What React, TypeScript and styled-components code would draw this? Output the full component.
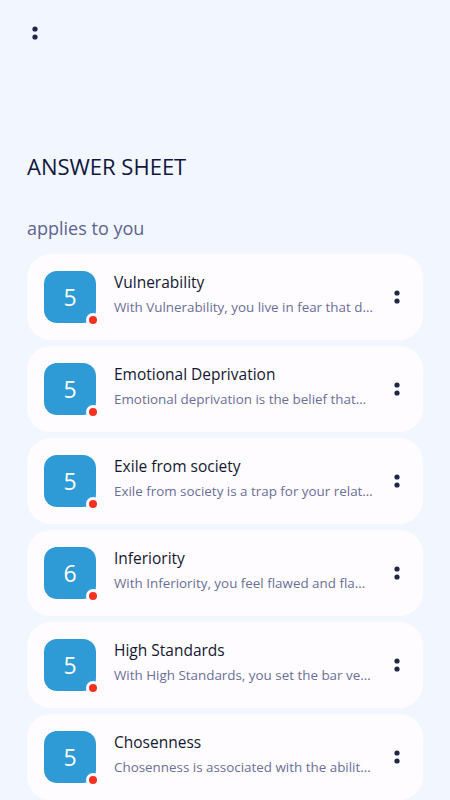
import React from 'react';
import styled, { createGlobalStyle } from 'styled-components';

const GlobalStyle = createGlobalStyle`
  html, body {
    margin: 0;
    padding: 0;
    background: #f2f6fe;
    font-family: "Open Sans", "Noto Sans", sans-serif;
  }
  * { box-sizing: border-box; }
`;

type Item = { score: number; title: string; text: string };

// descriptions are shown already shortened, as in the app's list
const items: Item[] = [
  { score: 5, title: 'Vulnerability', text: 'With Vulnerability, you live in fear that d…' },
  { score: 5, title: 'Emotional Deprivation', text: 'Emotional deprivation is the belief that…' },
  { score: 5, title: 'Exile from society', text: 'Exile from society is a trap for your relat…' },
  { score: 6, title: 'Inferiority', text: 'With Inferiority, you feel flawed and fla…' },
  { score: 5, title: 'High Standards', text: 'With High Standards, you set the bar ve…' },
  { score: 5, title: 'Chosenness', text: 'Chosenness is associated with the abilit…' },
];

const MoreIcon: React.FC = () => (
  <svg width="8" height="16" viewBox="0 0 8 16">
    <circle cx="4" cy="4" r="2.6" fill="#1f2747" />
    <circle cx="4" cy="12" r="2.6" fill="#1f2747" />
  </svg>
);

const App: React.FC = () => {
  return (
    <>
      <GlobalStyle />
      <Page>
        <TopBar>
          <IconButton aria-label="menu">
            <MoreIcon />
          </IconButton>
        </TopBar>
        <Heading>ANSWER SHEET</Heading>
        <Subheading>applies to you</Subheading>
        <List>
          {items.map((item) => (
            <Card key={item.title}>
              <Badge>
                {item.score}
                <Dot />
              </Badge>
              <TextBlock>
                <Title>{item.title}</Title>
                <Description>{item.text}</Description>
              </TextBlock>
              <CardMenu aria-label="options">
                <MoreIcon />
              </CardMenu>
            </Card>
          ))}
        </List>
      </Page>
    </>
  );
};

export default App;

const Page = styled.div`
  width: 450px;
  height: 800px;
  overflow: hidden;
  padding: 0 27px;
`;

const TopBar = styled.div`
  height: 151px;
  padding-top: 25px;
`;

const IconButton = styled.button`
  display: flex;
  align-items: center;
  justify-content: center;
  width: 16px;
  height: 16px;
  padding: 0;
  border: none;
  background: none;
`;

const Heading = styled.h1`
  margin: 0;
  font-size: 22px;
  line-height: 30px;
  font-weight: 400;
  color: #0f1740;
`;

const Subheading = styled.h2`
  margin: 35px 0 0;
  font-size: 18px;
  line-height: 24px;
  font-weight: 400;
  color: #5d6390;
`;

const List = styled.div`
  display: flex;
  flex-direction: column;
  gap: 6px;
  margin-top: 14px;
`;

const Card = styled.div`
  display: flex;
  align-items: center;
  height: 86px;
  padding: 0 18px 0 17px;
  background: #fefcff;
  border-radius: 24px;
`;

const Badge = styled.div`
  position: relative;
  flex: 0 0 52px;
  height: 52px;
  border-radius: 13px;
  background: #2e9bd6;
  color: #ffffff;
  font-size: 23px;
  display: flex;
  align-items: center;
  justify-content: center;
`;

const Dot = styled.span`
  position: absolute;
  right: -4px;
  bottom: -4px;
  width: 14px;
  height: 14px;
  border-radius: 50%;
  background: #f4301f;
  border: 3px solid #fefcff;
`;

const TextBlock = styled.div`
  flex: 1;
  min-width: 0;
  margin-left: 18px;
  display: flex;
  flex-direction: column;
  gap: 4px;
  padding-bottom: 6px;
`;

const Title = styled.div`
  font-size: 15.5px;
  line-height: 22px;
  color: #141830;
`;

const Description = styled.div`
  font-size: 13.4px;
  line-height: 20px;
  color: #6a6f96;
  white-space: nowrap;
`;

const CardMenu = styled.button`
  flex: 0 0 16px;
  display: flex;
  align-items: center;
  justify-content: center;
  height: 16px;
  margin-left: 14px;
  padding: 0;
  border: none;
  background: none;
`;
